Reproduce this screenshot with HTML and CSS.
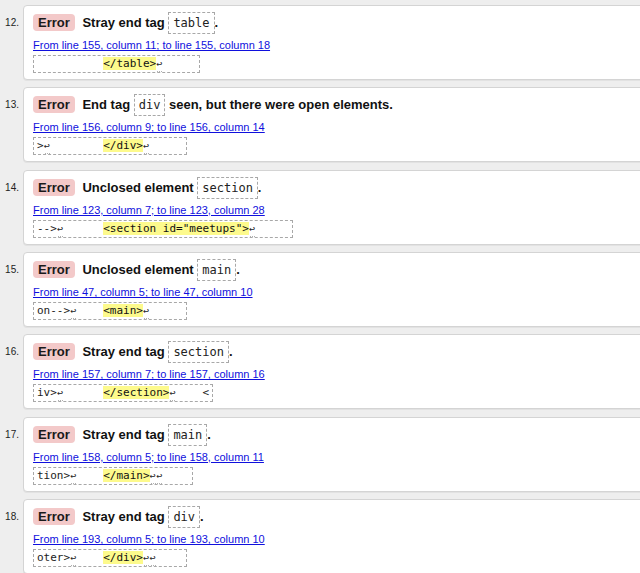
FILE: index.html
```html
<!DOCTYPE html>
<html lang="en">
<head>
<meta charset="utf-8">
<title>Validation results</title>
<link rel="stylesheet" href="styles.css">
</head>
<body>
<ol class="results">
  <li class="item">
    <span class="num">12.</span>
    <div class="card">
      <p class="msg"><span class="badge">Error</span> Stray end tag <code class="tag">table</code>.</p>
      <a class="loc" href="#">From line 155, column 11; to line 155, column 18</a>
      <code class="extract">          <mark class="hl">&lt;/table&gt;</mark><span class="lf">↩</span>     </code>
    </div>
  </li>
  <li class="item">
    <span class="num">13.</span>
    <div class="card">
      <p class="msg"><span class="badge">Error</span> End tag <code class="tag">div</code> seen, but there were open elements.</p>
      <a class="loc" href="#">From line 156, column 9; to line 156, column 14</a>
      <code class="extract">&gt;<span class="lf">↩</span>        <mark class="hl">&lt;/div&gt;</mark><span class="lf">↩</span>     </code>
    </div>
  </li>
  <li class="item">
    <span class="num">14.</span>
    <div class="card">
      <p class="msg"><span class="badge">Error</span> Unclosed element <code class="tag">section</code>.</p>
      <a class="loc" href="#">From line 123, column 7; to line 123, column 28</a>
      <code class="extract">--&gt;<span class="lf">↩</span>      <mark class="hl">&lt;section id="meetups"&gt;</mark><span class="lf">↩</span>     </code>
    </div>
  </li>
  <li class="item">
    <span class="num">15.</span>
    <div class="card">
      <p class="msg"><span class="badge">Error</span> Unclosed element <code class="tag">main</code>.</p>
      <a class="loc" href="#">From line 47, column 5; to line 47, column 10</a>
      <code class="extract">on--&gt;<span class="lf">↩</span>    <mark class="hl">&lt;main&gt;</mark><span class="lf">↩</span>     </code>
    </div>
  </li>
  <li class="item">
    <span class="num">16.</span>
    <div class="card">
      <p class="msg"><span class="badge">Error</span> Stray end tag <code class="tag">section</code>.</p>
      <a class="loc" href="#">From line 157, column 7; to line 157, column 16</a>
      <code class="extract">iv&gt;<span class="lf">↩</span>      <mark class="hl">&lt;/section&gt;</mark><span class="lf">↩</span>    &lt;</code>
    </div>
  </li>
  <li class="item">
    <span class="num">17.</span>
    <div class="card">
      <p class="msg"><span class="badge">Error</span> Stray end tag <code class="tag">main</code>.</p>
      <a class="loc" href="#">From line 158, column 5; to line 158, column 11</a>
      <code class="extract">tion&gt;<span class="lf">↩</span>    <mark class="hl">&lt;/main&gt;</mark><span class="lf">↩</span><span class="lf">↩</span>    </code>
    </div>
  </li>
  <li class="item">
    <span class="num">18.</span>
    <div class="card">
      <p class="msg"><span class="badge">Error</span> Stray end tag <code class="tag">div</code>.</p>
      <a class="loc" href="#">From line 193, column 5; to line 193, column 10</a>
      <code class="extract">oter&gt;<span class="lf">↩</span>    <mark class="hl">&lt;/div&gt;</mark><span class="lf">↩</span><span class="lf">↩</span>    </code>
    </div>
  </li>
</ol>
</body>
</html>
```
FILE: styles.css
```css
html, body {
  margin: 0;
  padding: 0;
}
body {
  background: #eeeeee;
  font-family: "Liberation Sans", Arial, sans-serif;
  color: #111;
  overflow: hidden;
  width: 640px;
  height: 573px;
}
.results {
  list-style: none;
  margin: 0;
  padding: 5px 0 0 0;
}
.item {
  display: flex;
  align-items: flex-start;
  margin-bottom: 7.33px;
}
.num {
  flex: 0 0 19px;
  width: 19px;
  text-align: right;
  font-size: 10px;
  line-height: 20px;
  margin-top: 8px;
  margin-right: 4px;
  color: #222;
}
.card {
  flex: 0 0 auto;
  width: 640px;
  background: #fff;
  border: 1px solid #d4d4d4;
  border-radius: 4px;
  padding: 6px 10px 6px 9px;
  box-shadow: 0 1px 0 #e2e2e2;
}
.msg {
  margin: 0;
  font-size: 13px;
  font-weight: bold;
  line-height: 21px;
  height: 21px;
  color: #111;
}
.badge {
  display: inline-block;
  background: #f3c9c9;
  border-radius: 4px;
  padding: 0 5px;
  line-height: 17px;
  margin-right: 4px;
  color: #1a1a1a;
}
.tag {
  font-family: "DejaVu Sans Mono", "Liberation Mono", monospace;
  font-weight: normal;
  font-size: 12px;
  line-height: 12px;
  border: 1px dashed #a8a8a8;
  padding: 3px 4px;
  color: #222;
}
.loc {
  display: block;
  margin-top: 5px;
  font-size: 11px;
  line-height: 14px;
  color: #1010dd;
  text-decoration: underline;
}
.extract {
  display: block;
  width: fit-content;
  height: 16px;
  margin-top: 3px;
  font-family: "DejaVu Sans Mono", "Liberation Mono", monospace;
  font-size: 11px;
  line-height: 16px;
  white-space: pre;
  border: 1px dashed #a8a8a8;
  padding: 0 3px;
  color: #222;
}
.hl {
  background: #fdfa8c;
  color: #111;
}
.lf {
  position: relative;
  display: inline-block;
  width: 6.62px;
  font-size: 10px;
  line-height: 8px;
  color: #222;
  text-align: left;
  overflow: visible;
}
.lf::after {
  content: "";
  position: absolute;
  left: 1px;
  bottom: -4px;
  width: 5px;
  height: 1px;
  border-bottom: 1px dotted #b0b0b0;
}
```
